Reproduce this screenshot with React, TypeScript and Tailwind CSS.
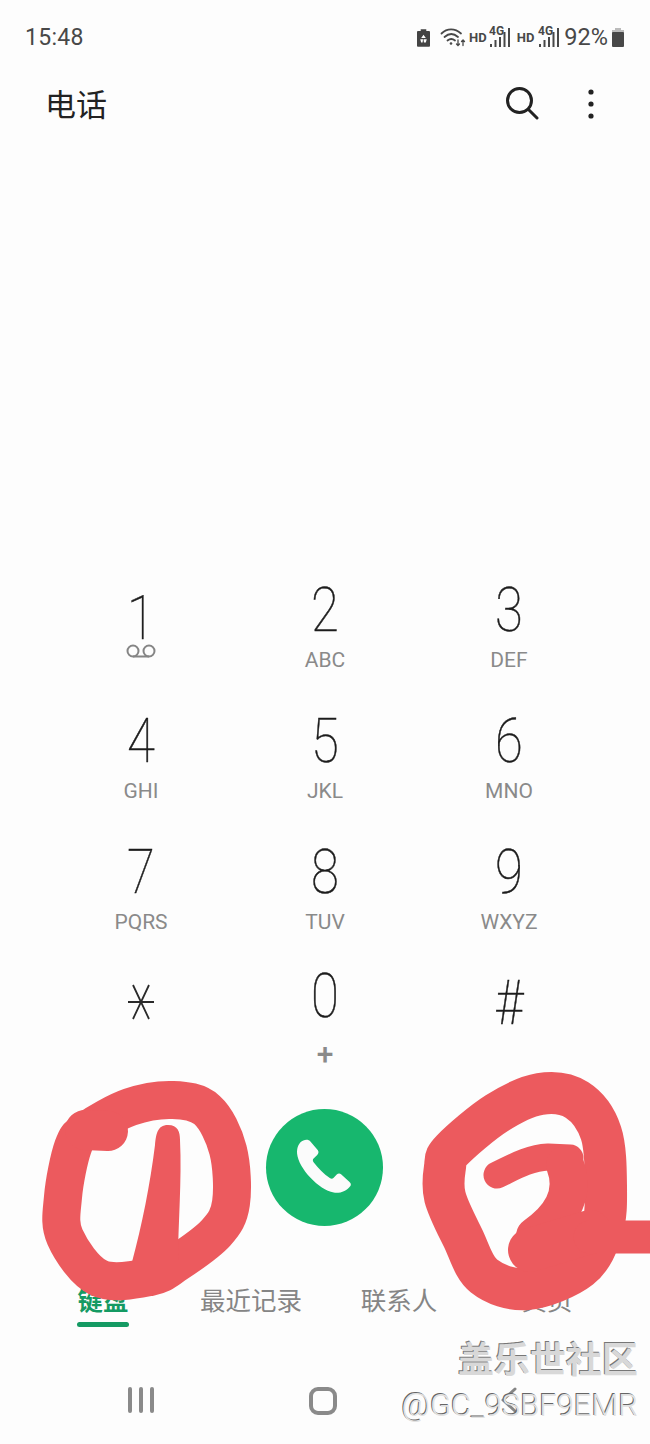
import React from "react";

type P = [number, number];

function smooth(pts: P[], closed = false): string {
  const n = pts.length;
  const at = (i: number): P => (closed ? pts[(i + n) % n] : pts[Math.max(0, Math.min(n - 1, i))]);
  let d = `M${pts[0][0]} ${pts[0][1]}`;
  const last = closed ? n : n - 1;
  for (let i = 0; i < last; i++) {
    const p0 = at(i - 1), p1 = at(i), p2 = at(i + 1), p3 = at(i + 2);
    d += ` C${(p1[0] + (p2[0] - p0[0]) / 6).toFixed(1)} ${(p1[1] + (p2[1] - p0[1]) / 6).toFixed(1)} ${(p2[0] - (p3[0] - p1[0]) / 6).toFixed(1)} ${(p2[1] - (p3[1] - p1[1]) / 6).toFixed(1)} ${p2[0]} ${p2[1]}`;
  }
  return d + (closed ? " Z" : "");
}

const leftLoop: P[] = [[87,1130],[130,1107],[173,1100],[207,1110],[228,1150],[231,1203],[216,1233],[177,1263],[150,1277],[99,1278],[65,1237],[63,1197],[73,1147]];
const rightLoop: P[] = [[452,1150],[497,1113],[540,1094],[577,1100],[601,1133],[606,1187],[602,1230],[580,1268],[527,1289],[484,1276],[463,1238],[445,1197],[445,1167]];

function Scribbles() {
  return (
    <svg className="absolute left-0 top-0 pointer-events-none" width="650" height="1444" viewBox="0 0 650 1444" fill="none" stroke="#ec5a5e" strokeLinecap="round" strokeLinejoin="round">
      <path d={smooth(leftLoop, true)} strokeWidth="38" />
      <path d="M85 1130 L108 1131" strokeWidth="40" />
      <path d="M168 1125 C157 1125 156 1135 155 1145 C150 1185 142 1225 132 1262 L178 1262 C178 1225 182 1180 180 1140 C180 1132 178 1125 168 1125 Z" fill="#ec5a5e" stroke="none" />
      <path d={smooth(rightLoop, true)} strokeWidth="42" />
      <path d="M497 1175 C512 1168 528 1158 548 1157 L570 1158" strokeWidth="27" />
      <path d="M565 1165 C575 1190 565 1215 535 1236" strokeWidth="38" />
      <path d="M530 1250 L590 1232" strokeWidth="44" />
      <path d="M590 1237 L660 1237" strokeWidth="33" />
    </svg>
  );
}

function Signal() {
  return (
    <svg width="23" height="26" viewBox="0 0 23 26">
      <text x="0" y="11" fontSize="12" fontWeight="700" fontFamily="Roboto, sans-serif" fill="#484848">4G</text>
      <g fill="#484848">
        <rect x="1" y="20" width="2" height="3" />
        <rect x="5.500" y="16" width="2" height="7" />
        <rect x="10" y="13" width="2" height="10" />
        <rect x="14.500" y="8" width="2" height="15" />
        <rect x="19" y="4" width="2" height="19" />
      </g>
    </svg>
  );
}

function StatusBar() {
  return (
    <div className="h-[74px] flex items-start justify-between pl-[25px] pr-[25px] pt-[24px] text-[#484848] font-['Roboto',sans-serif]">
      <span className="text-[23px] leading-[28px] tracking-[0.3px]">15:48</span>
      <div className="flex items-center h-[28px] -mt-[1px]">
        <svg width="13" height="19" viewBox="0 0 14 20" className="mr-[10px]">
          <path d="M4 1h6v2h3a1 1 0 0 1 1 1v15a1 1 0 0 1-1 1H1a1 1 0 0 1-1-1V4a1 1 0 0 1 1-1h3z" fill="#444" />
          <path d="M7 7l2.500 3.500h-5zM3.500 12h3l-.500 3.500h-1.500zM10.500 12l-1 3.500h-2l-.500-3.500z" fill="#fff" />
        </svg>
        <svg width="26" height="22" viewBox="0 0 26 22" fill="none" stroke="#484848" strokeWidth="1.800" strokeLinecap="round" className="mr-[3px]">
          <path d="M1.500 7.500C7 2 15 2 21 7.500" />
          <path d="M4.500 11C9 7 13.500 7 18 11" />
          <path d="M7.500 14.500C10 12.500 12.500 12.500 15 14.500" />
          <circle cx="11" cy="17.500" r="1.300" fill="#484848" stroke="none" />
          <path d="M18 14v5.500M16.500 18l1.500 1.500 1.500-1.500M23 19.500V14M21.500 15.500l1.500-1.500 1.500 1.500" strokeWidth="1.300" />
        </svg>
        <span className="text-[13px] font-bold mr-[2px] leading-none">HD</span>
        <Signal />
        <span className="text-[13px] font-bold ml-[5px] mr-[4px] leading-none">HD</span>
        <Signal />
        <span className="text-[23.500px] leading-[28px] ml-[3px] mr-[3px]">92%</span>
        <svg width="14" height="19" viewBox="0 0 14 19">
          <rect x="4" y="0" width="6" height="3" fill="#bbb" />
          <rect x="1" y="2" width="12" height="3" fill="#bbb" />
          <rect x="1" y="4" width="12" height="15" rx="1" fill="#484848" />
        </svg>
      </div>
    </div>
  );
}

function Header() {
  return (
    <div className="h-[60px] flex items-center pl-[45px]">
      <span className="text-[31px] leading-[58px] -mt-[2px] text-[#222] font-['Noto_Sans_CJK_SC',sans-serif]">电话</span>
      <div className="ml-auto flex items-center pr-[56px]">
        <svg width="34" height="34" viewBox="0 0 34 34" fill="none" stroke="#222" strokeWidth="3" strokeLinecap="round" className="mr-[49px]">
          <circle cx="14.500" cy="13.500" r="12" />
          <path d="M23.500 22.500L32 31" />
        </svg>
        <svg width="6" height="30" viewBox="0 0 6 30" fill="#222">
          <circle cx="3" cy="3" r="2.600" />
          <circle cx="3" cy="15" r="2.600" />
          <circle cx="3" cy="27" r="2.600" />
        </svg>
      </div>
    </div>
  );
}

function Digit({ children, className = "" }: { children: React.ReactNode; className?: string }) {
  return (
    <div className={`h-[70px] flex items-center justify-center text-[62px] leading-none font-thin text-[#1c1c1c] scale-x-[0.82] [-webkit-text-stroke:0.5px_#1c1c1c] font-['Roboto',sans-serif] ${className}`}>
      {children}
    </div>
  );
}

function Label({ children }: { children: React.ReactNode }) {
  return (
    <div className="h-[30px] pt-[2px] flex items-center justify-center text-[21px] text-[#8a8a8a] font-['Roboto',sans-serif]">
      {children}
    </div>
  );
}

function Key({ d, l }: { d: string; l: string }) {
  return (
    <div className="h-[131px] flex flex-col items-center">
      <Digit>{d}</Digit>
      <Label>{l}</Label>
    </div>
  );
}

function Keypad() {
  return (
    <div className="grid grid-cols-3 px-[49px]">
      <div className="h-[131px] flex flex-col items-center">
        <Digit className="pt-[16px]">1</Digit>
        <svg width="32" height="14" viewBox="0 0 32 14" fill="none" stroke="#858585" strokeWidth="2" className="mt-[-1px]">
          <circle cx="8" cy="7" r="5.500" />
          <circle cx="24" cy="7" r="5.500" />
          <path d="M8 12.500H24" />
        </svg>
      </div>
      <Key d="2" l="ABC" />
      <Key d="3" l="DEF" />
      <Key d="4" l="GHI" />
      <Key d="5" l="JKL" />
      <Key d="6" l="MNO" />
      <Key d="7" l="PQRS" />
      <Key d="8" l="TUV" />
      <Key d="9" l="WXYZ" />
      <div className="h-[141px] flex flex-col items-center pt-[16px]">
        <svg width="28" height="36" viewBox="0 0 28 36" fill="none" stroke="#2a2a2a" strokeWidth="1.800">
          <path d="M1 18H27M6 1L22 35M22 1L6 35" />
        </svg>
      </div>
      <div className="h-[141px] flex flex-col items-center">
        <Digit className="-mt-[7px]">0</Digit>
        <div className="h-[30px] mt-[8px] flex items-center justify-center">
          <span className="text-[30px] leading-none font-medium text-[#8a8a8a] font-['Roboto',sans-serif]">+</span>
        </div>
      </div>
      <div className="h-[141px] flex flex-col items-center">
        <Digit>#</Digit>
      </div>
    </div>
  );
}

function CallButton() {
  return (
    <div className="flex justify-center h-[117px]">
      <div className="w-[117px] h-[117px] -ml-[1px] rounded-full bg-[#17b76e]">
        <svg width="117" height="117" viewBox="0 0 354 354" fill="#fbfbfb">
          <path d="M113 95C100 100 93 115 94 135C98 180 160 245 205 253C225 256 245 247 256 232C258 227 256 224 252 220L228 198C223 194 218 195 214 198L204 209C201 212 197 212 193 209C175 197 157 178 144 161C141 157 141 153 144 150L155 139C159 135 160 130 157 125L135 99C130 93 122 92 113 95Z" />
        </svg>
      </div>
    </div>
  );
}

function Tabs() {
  const tabs = ["键盘", "最近记录", "联系人", "黄页"];
  return (
    <div className="grid grid-cols-4 px-[29px] mt-[56px] font-['Noto_Sans_CJK_SC',sans-serif]">
      {tabs.map((t, i) => (
        <div key={t} className="flex flex-col items-center">
          <span className={`text-[25.500px] leading-[34px] ${i === 0 ? "text-[#149a63] font-bold" : "text-[#858585]"}`}>{t}</span>
          {i === 0 && <div className="mt-[6px] w-[52px] h-[5px] rounded-full bg-[#149a63]" />}
        </div>
      ))}
    </div>
  );
}

function NavBar() {
  return (
    <div className="grid grid-cols-3 px-[49px] mt-[60px]">
      <div className="flex justify-center gap-[7px]">
        <div className="w-[4px] h-[26px] rounded-sm bg-[#8a8a8a]" />
        <div className="w-[4px] h-[26px] rounded-sm bg-[#8a8a8a]" />
        <div className="w-[4px] h-[26px] rounded-sm bg-[#8a8a8a]" />
      </div>
      <div className="flex justify-center">
        <div className="w-[28px] h-[28px] -ml-[5px] rounded-[9px] border-[4px] border-[#8a8a8a]" />
      </div>
      <div className="flex justify-center">
        <svg width="18" height="26" viewBox="0 0 18 26" fill="none" stroke="#858585" strokeWidth="3" strokeLinecap="round" strokeLinejoin="round">
          <path d="M15 2L3 13L15 24" />
        </svg>
      </div>
    </div>
  );
}

function Watermark() {
  return (
    <div className="absolute right-[12px] top-[1336px] flex flex-col items-end pointer-events-none">
      <span className="text-[36px] leading-[42px] font-bold text-[#d8d8d8] [text-shadow:-1px_-1px_0_#777] font-['Noto_Sans_CJK_SC',sans-serif]">盖乐世社区</span>
      <span className="text-[31px] leading-[36px] mt-[10px] font-light text-[#e2e2e2] [text-shadow:-1px_-1px_0_#666] font-['Roboto',sans-serif]">@GC_9SBF9EMR</span>
    </div>
  );
}

export default function App() {
  return (
    <div className="relative w-[650px] h-[1444px] overflow-hidden bg-[#fdfdfd]">
      <StatusBar />
      <Header />
      <div className="h-[441px]" />
      <Keypad />
      <CallButton />
      <Tabs />
      <NavBar />
      <Scribbles />
      <Watermark />
    </div>
  );
}
